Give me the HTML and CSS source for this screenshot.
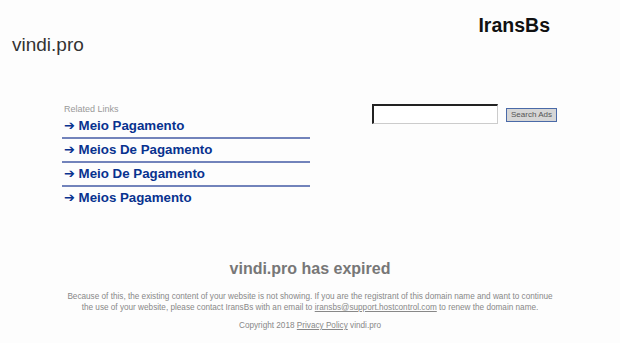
FILE: index.html
```html
<!DOCTYPE html>
<html lang="en">
<head>
<meta charset="utf-8">
<title>vindi.pro</title>
<link rel="stylesheet" href="styles.css">
</head>
<body>
<div class="header">
  <div class="site-name">vindi.pro</div>
  <div class="brand">IransBs</div>
</div>
<div class="main">
  <div class="links">
    <div class="links-title">Related Links</div>
    <a class="link-row" href="#"><span class="arrow">➔</span> Meio Pagamento</a>
    <a class="link-row" href="#"><span class="arrow">➔</span> Meios De Pagamento</a>
    <a class="link-row" href="#"><span class="arrow">➔</span> Meio De Pagamento</a>
    <a class="link-row last" href="#"><span class="arrow">➔</span> Meios Pagamento</a>
  </div>
  <form class="search" onsubmit="return false;">
    <input class="search-input" type="text">
    <button class="search-btn" type="button">Search Ads</button>
  </form>
</div>
<div class="footer">
  <div class="expired">vindi.pro has expired</div>
  <p class="notice">Because of this, the existing content of your website is not showing. If you are the registrant of this domain name and want to continue<br>the use of your website, please contact IransBs with an email to <a href="#">iransbs@support.hostcontrol.com</a> to renew the domain name.</p>
  <p class="copyright">Copyright 2018 <a href="#">Privacy Policy</a> vindi.pro</p>
</div>
</body>
</html>
```

FILE: styles.css
```css
html, body {
  margin: 0;
  padding: 0;
  background: #fdfdfd;
  font-family: "Liberation Sans", Arial, sans-serif;
}

.header {
  display: flex;
  justify-content: space-between;
  align-items: flex-start;
  padding: 14px 70px 0 12px;
}

.site-name {
  margin-top: 20px;
  font-size: 19px;
  line-height: 22px;
  color: #333;
}

.brand {
  font-size: 19.5px;
  line-height: 22px;
  font-weight: bold;
  color: #111;
}

.main {
  display: flex;
  align-items: flex-start;
  padding-left: 62px;
  margin-top: 47px;
}

.links {
  width: 248px;
  display: flex;
  flex-direction: column;
}

.links-title {
  padding-left: 2px;
  font-size: 9px;
  line-height: 12px;
  color: #999;
}

.link-row {
  display: block;
  padding-left: 2px;
  height: 22px;
  line-height: 22px;
  font-size: 13.3px;
  font-weight: bold;
  color: #08328f;
  text-decoration: none;
  border-bottom: 2px solid #7283bb;
}

.link-row.last {
  border-bottom: none;
}

.arrow {
  font-family: "DejaVu Sans", sans-serif;
  font-size: 13px;
  font-weight: bold;
}

.search {
  display: flex;
  align-items: flex-start;
  gap: 8px;
  margin: 1px 0 0 62px;
}

.search-input {
  box-sizing: border-box;
  width: 126px;
  height: 20px;
  margin: 0;
  padding: 0 3px;
  background: #fff;
  border: 2px solid;
  border-color: #222 #ccc #ccc #222;
  border-width: 2px 1px 1px 2px;
}

.search-btn {
  box-sizing: border-box;
  width: 51px;
  height: 14px;
  margin: 4px 0 0 0;
  padding: 0;
  font-family: "Liberation Sans", Arial, sans-serif;
  font-size: 8px;
  line-height: 12px;
  color: #555;
  background: #d6d6d6;
  border: 1px solid #4a6aa8;
}

.footer {
  margin-top: 50px;
  text-align: center;
  color: #888;
}

.expired {
  font-size: 16px;
  line-height: 20px;
  font-weight: bold;
  color: #777;
}

.notice {
  margin: 12px 0 0;
  font-size: 8.2px;
  line-height: 11px;
}

.notice a, .copyright a {
  color: #888;
  text-decoration: underline;
}

.copyright {
  margin: 7px 0 0;
  font-size: 8.2px;
  line-height: 11px;
}
```
